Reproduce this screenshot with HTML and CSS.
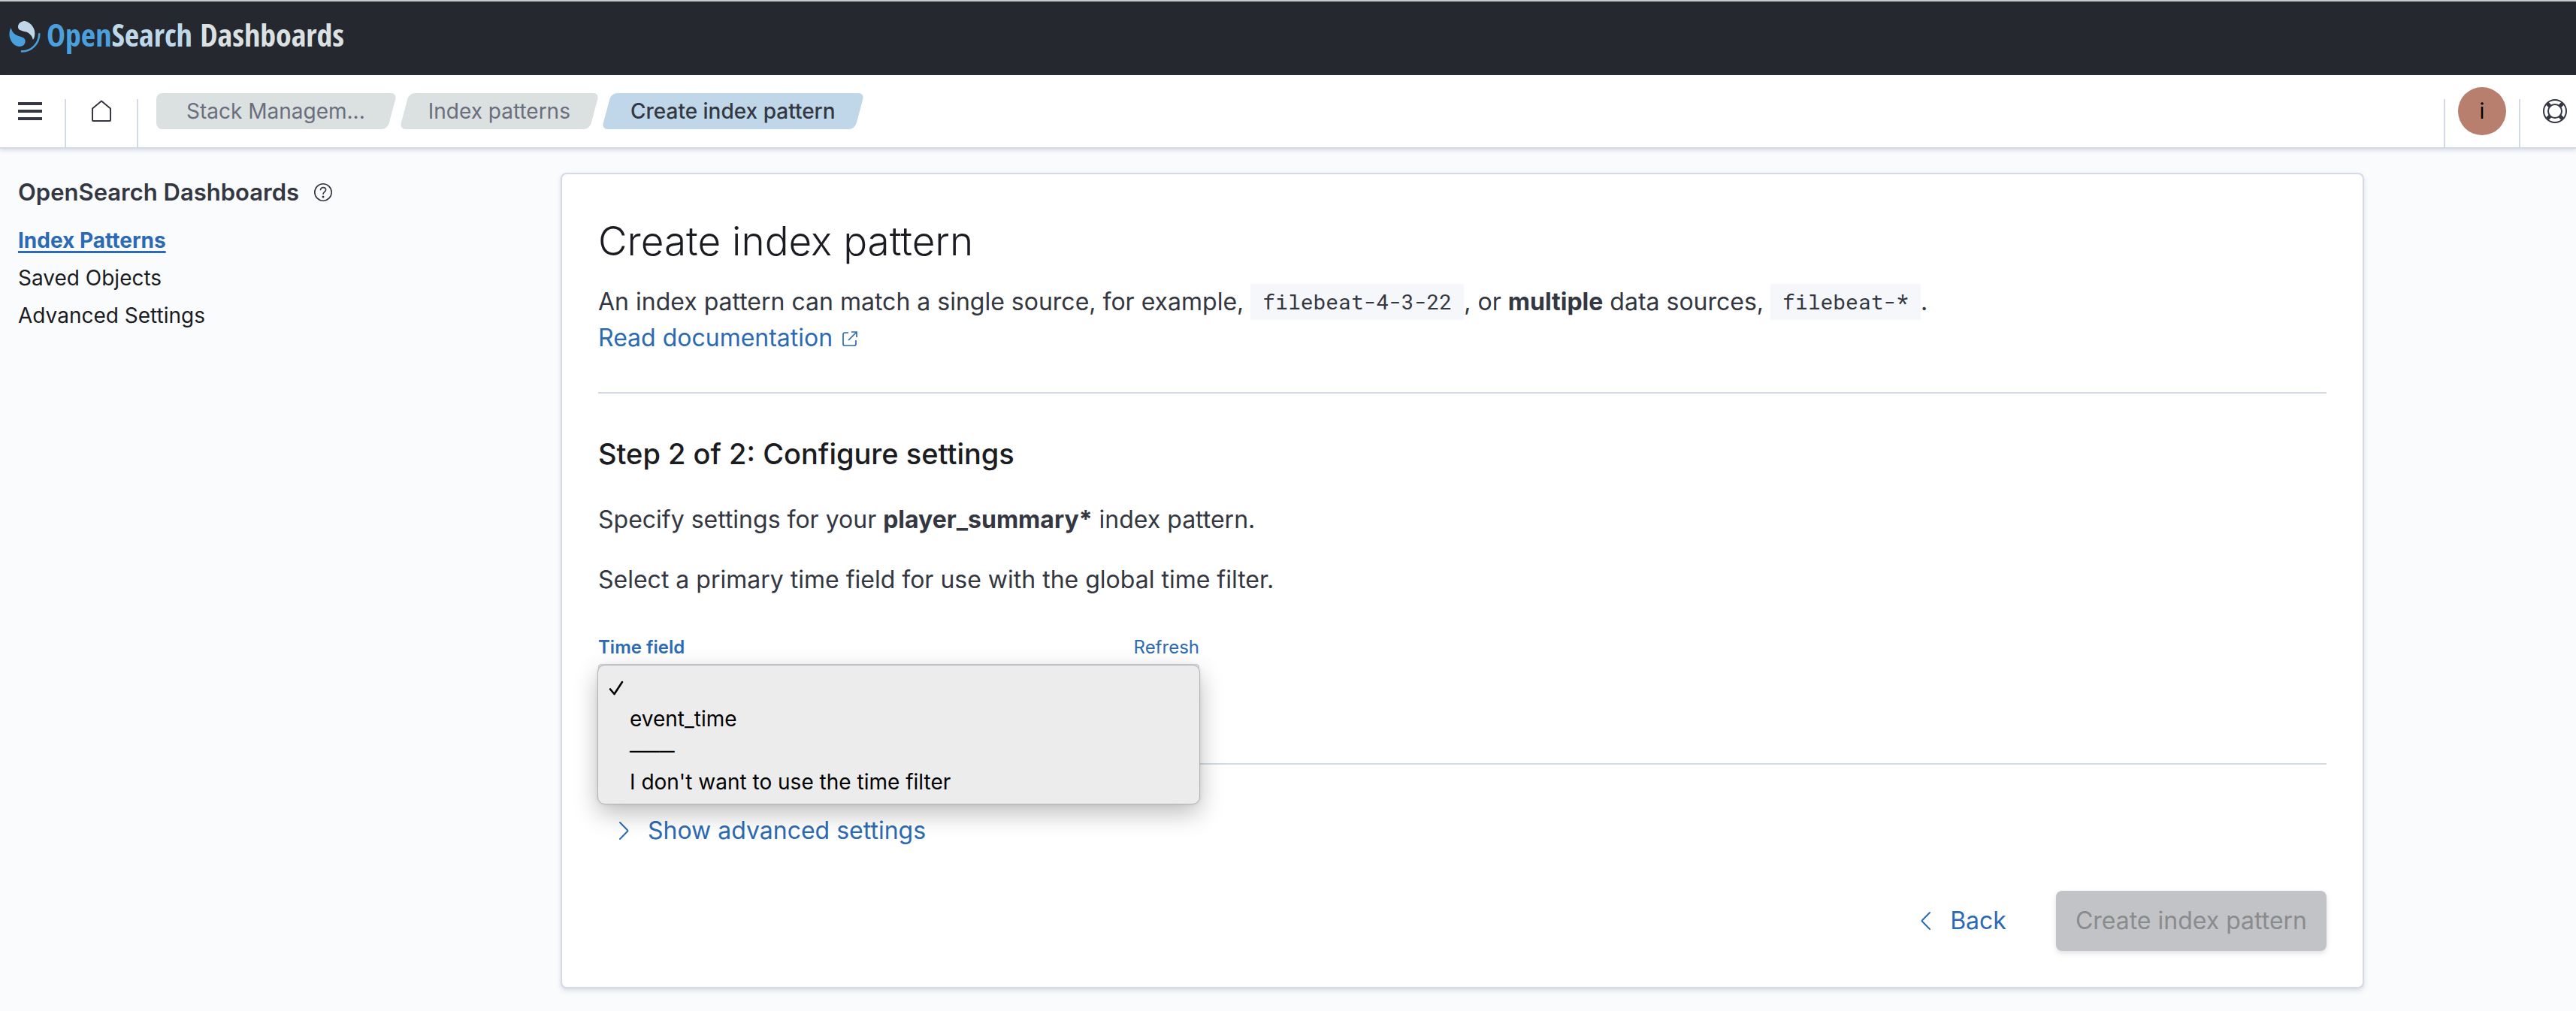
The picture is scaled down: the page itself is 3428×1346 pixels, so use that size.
FILE: index.html
```html
<!DOCTYPE html>
<html lang="en">
<head>
<meta charset="utf-8">
<title>Create index pattern - OpenSearch Dashboards</title>
<link rel="stylesheet" href="styles.css">
</head>
<body>
<header class="brand-bar">
  <a class="brand" href="#">
    <svg class="brand-mark" viewBox="0 0 42 42" aria-hidden="true">
      <path fill="#bfd8e9" d="M12 7C13 2 17 0 21 0C30 2 36 11 34 20C33.600 22.300 33 23.800 31.800 25C31 20 28 16.800 23 14.600C17 12.600 11.500 12.800 12 7Z"/>
      <path fill="#4aa0dc" d="M2.600 9C-1.400 16 .3 26 7 31.500C11 34.500 17 35 20.300 31.200C23 27 22 23 17 21.200C10 19 5 18 2.600 9Z"/>
      <path fill="none" stroke="#4aa0dc" stroke-width="2.600" stroke-linecap="round" d="M40.300 17.300C40 30 30 40.500 17 40.400"/>
    </svg>
    <span class="brand-name"><span class="brand-open">Open</span><span class="brand-search">Search</span> Dashboards</span>
  </a>
</header>
<nav class="top-nav" aria-label="Breadcrumbs">
  <button class="nav-button menu-button" type="button" aria-label="Toggle navigation">
    <svg class="icon" viewBox="0 0 32 32" aria-hidden="true"><path fill="#343741" d="M0 4h32v4H0zM0 14h32v4H0zM0 24h32v4H0z"/></svg>
  </button>
  <a class="nav-button home-button" href="#" aria-label="Home">
    <svg class="icon" viewBox="0 0 32 32" aria-hidden="true"><path fill="none" stroke="#343741" stroke-width="2" stroke-linejoin="round" d="M4 12.500L16 2.500L28 12.500V28a1 1 0 0 1-1 1H5a1 1 0 0 1-1-1Z"/></svg>
  </a>
  <ol class="crumbs">
    <li><a class="crumb crumb-first" href="#">Stack Managem...</a></li>
    <li><a class="crumb" href="#">Index patterns</a></li>
    <li><span class="crumb crumb-current" aria-current="page">Create index pattern</span></li>
  </ol>
  <button class="nav-button user-button" type="button" aria-label="Account"><span class="avatar">i</span></button>
  <button class="nav-button help-button" type="button" aria-label="Help">
    <svg class="icon" viewBox="0 0 32 32" aria-hidden="true">
      <g fill="none" stroke="#343741" stroke-width="2"><circle cx="16" cy="16" r="15"/><circle cx="16" cy="16" r="9"/></g>
      <path stroke="#343741" stroke-width="5" d="M5.800 5.800l3.800 3.800M26.200 5.800l-3.800 3.800M5.800 26.200l3.800-3.800M26.200 26.200l-3.800-3.800"/>
    </svg>
  </button>
</nav>
<div class="page">
  <aside class="sidebar">
    <h2 class="sidebar-title">OpenSearch Dashboards
      <svg class="sidebar-help" viewBox="0 0 24 24" aria-hidden="true"><circle cx="12" cy="12" r="11.200" fill="none" stroke="#343741" stroke-width="1.600"/><path fill="none" stroke="#343741" stroke-width="1.700" d="M8.500 9.200C8.500 6.800 10 5.600 12 5.600S15.600 6.900 15.600 8.800C15.600 11.500 12 11.500 12 14.800"/><circle cx="12" cy="18" r="1.500" fill="#343741"/></svg>
    </h2>
    <ul class="side-links">
      <li><a class="side-link side-link-active" href="#" aria-current="page">Index Patterns</a></li>
      <li><a class="side-link" href="#">Saved Objects</a></li>
      <li><a class="side-link" href="#">Advanced Settings</a></li>
    </ul>
  </aside>
  <main class="content">
    <section class="panel">
      <h1 class="title">Create index pattern</h1>
      <p class="intro">An index pattern can match a single source, for example, <code>filebeat-4-3-22</code>, or <strong>multiple</strong> data sources, <code>filebeat-*</code>.<br>
        <a class="link" href="#">Read documentation <svg class="external" viewBox="0 0 20 20" aria-hidden="true"><path fill="none" stroke="currentColor" stroke-width="1.700" d="M8 2H3a2 2 0 0 0-2 2v13a2 2 0 0 0 2 2h13a2 2 0 0 0 2-2V12M12 1h7v7M19 1L8 12"/></svg></a></p>
      <hr class="rule">
      <h2 class="step">Step 2 of 2: Configure settings</h2>
      <p class="text">Specify settings for your <strong>player_summary*</strong> index pattern.</p>
      <p class="text">Select a primary time field for use with the global time filter.</p>
      <form class="form">
        <div class="field">
          <div class="field-head">
            <label class="field-label" for="time-field">Time field</label>
            <button class="refresh" type="button">Refresh</button>
          </div>
          <div class="select-wrap">
            <select class="select" id="time-field">
              <option selected></option>
              <option>event_time</option>
              <option disabled>───</option>
              <option>I don't want to use the time filter</option>
            </select>
            <ul class="menu" role="listbox" aria-label="Time field">
              <li class="menu-item" role="option" aria-selected="true"><svg class="check" viewBox="0 0 20 20" aria-label="Selected"><path fill="none" stroke="#000" stroke-width="2.600" stroke-linecap="round" stroke-linejoin="round" d="M2 11.500L7.500 18L18 2"/></svg></li>
              <li class="menu-item" role="option">event_time</li>
              <li class="menu-item" role="option" aria-disabled="true">───</li>
              <li class="menu-item" role="option">I don't want to use the time filter</li>
            </ul>
          </div>
        </div>
        <hr class="rule">
        <button class="button-empty advanced" type="button"><svg class="icon" viewBox="0 0 32 32" aria-hidden="true"><path fill="none" stroke="currentColor" stroke-width="2" stroke-linecap="round" stroke-linejoin="round" d="M11 5L21 15.200a1 1 0 0 1 0 1.600L11 27"/></svg>Show advanced settings</button>
        <div class="actions">
          <button class="button-empty" type="button"><svg class="icon" viewBox="0 0 32 32" aria-hidden="true"><path fill="none" stroke="currentColor" stroke-width="2" stroke-linecap="round" stroke-linejoin="round" d="M21 5L11 15.200a1 1 0 0 0 0 1.600L21 27"/></svg>Back</button>
          <button class="button-fill" type="submit" disabled>Create index pattern</button>
        </div>
      </form>
    </section>
  </main>
</div>
</body>
</html>
```

FILE: styles.css
```css
* { box-sizing: border-box; }

body {
  margin: 0;
  background: #fafbfd;
  color: #343741;
  font: 400 32px/48px Inter, "Liberation Sans", sans-serif;
}

h1, h2, p, ul, ol { margin: 0; padding: 0; }
ul, ol { list-style: none; }
a { color: inherit; text-decoration: none; }
button { border: 0; padding: 0; background: none; font: inherit; color: inherit; cursor: pointer; }
strong { font-weight: 700; }
.icon { display: block; flex: none; width: 32px; height: 32px; }

/* Brand bar */
.brand-bar {
  display: flex;
  align-items: flex-start;
  height: 100px;
  padding: 18px 12px;
  border-top: 2px solid #c9c9cb;
  background: #25282f;
}
.brand { display: flex; align-items: flex-start; gap: 8px; }
.brand-mark { width: 42px; height: 42px; margin-top: 8px; }
.brand-name {
  color: #dbe0e1;
  font: 700 42px/52px "Open Sans Condensed", "Liberation Sans Narrow", "Roboto Condensed", "Open Sans", sans-serif;
  white-space: nowrap;
}
.brand-open { color: #4aa0dc; }
.brand-search { color: #bfd8e9; }

/* Navigation bar */
.top-nav {
  position: relative;
  display: flex;
  height: 98px;
  border-bottom: 2px solid #d3dae6;
  background: #fff;
  box-shadow: 0 2px 6px rgba(100, 115, 150, .25);
}
.nav-button {
  display: flex;
  justify-content: center;
  height: 64px;
  margin-top: 32px;
}
.menu-button { width: 88px; padding-right: 6px; border-right: 2px solid #d3dae6; }
.home-button { width: 96px; border-right: 2px solid #d3dae6; }
.user-button { width: 102px; border-left: 2px solid #d3dae6; border-right: 2px solid #d3dae6; }
.help-button { width: 74px; padding-left: 18px; }
.avatar {
  width: 64px;
  height: 64px;
  margin-top: -16px;
  border-radius: 50%;
  background: #b87f6e;
  color: #000;
  font-size: 28px;
  line-height: 64px;
}
.crumbs { display: flex; flex: 1; gap: 16px; padding: 24px; }
.crumb {
  position: relative;
  z-index: 0;
  display: block;
  padding: 0 32px;
  color: #6a6f7d;
  font-size: 28px;
}
.crumb::before {
  content: "";
  position: absolute;
  z-index: -1;
  inset: 0;
  border-radius: 8px;
  background: #dbe0e1;
  transform: skewX(-15deg);
}
.crumb-first { padding: 0 36px 0 40px; border-radius: 8px 0 0 8px; background: linear-gradient(#dbe0e1, #dbe0e1) left / 50% 100% no-repeat; }
.crumb-first::before { left: 24px; }
.crumb-current { color: #343741; font-weight: 500; }
.crumb-current::before { background: #bfd7e8; }

/* Page */
.page { display: flex; padding: 32px 0; }
.sidebar { flex: none; width: 464px; padding: 2px 0 0 24px; }
.sidebar-title { display: flex; align-items: center; gap: 20px; font-size: 31px; font-weight: 600; }
.sidebar-help { width: 24px; height: 24px; }
.side-links { padding-top: 16px; }
.side-link { display: inline-block; margin-bottom: 2px; color: #1a1c21; font-size: 28px; vertical-align: top; }
.side-link-active {
  color: #2c6bb3;
  font-weight: 700;
  text-decoration: underline 3px;
  text-underline-offset: 4px;
}

.content { flex: 1; min-width: 0; }
.panel {
  max-width: 2400px;
  margin: 0 auto;
  padding: 48px;
  border: 2px solid #d3dae6;
  border-radius: 8px;
  background: #fff;
  box-shadow: 0 3px 6px rgba(100, 115, 150, .22);
}
.title { margin-bottom: 16px; color: #1a1c21; font-size: 53px; font-weight: 300; line-height: 82px; }
.intro code {
  display: inline-block;
  padding: 0 16px;
  background: #f5f7fa;
  font: 400 28px/48px "Roboto Mono", "DejaVu Sans Mono", monospace;
  vertical-align: top;
}
.link, .refresh, .button-empty { color: #2c6bb3; }
.external { width: 20px; height: 20px; margin-left: 4px; }
.rule { height: 2px; margin: 48px 0; border: 0; background: #d3dae6; }
.step { margin: 56px 0 40px; color: #1a1c21; font-size: 38px; font-weight: 500; }
.text { margin-bottom: 32px; }

/* Time field */
.form { padding-top: 16px; }
.field { max-width: 800px; margin-bottom: 52px; }
.field-head { display: flex; justify-content: space-between; margin-bottom: 4px; font-size: 24px; line-height: 36px; }
.field-label { color: #2c6bb3; font-weight: 600; }
.select-wrap { position: relative; }
.select {
  display: block;
  width: 100%;
  height: 80px;
  padding: 0 24px;
  border: 2px solid #d3dae6;
  border-radius: 4px;
  background: #fbfcfd;
  font: inherit;
}
.menu {
  position: absolute;
  top: 1px;
  left: -1px;
  right: -1px;
  padding: 8px 0;
  border: 1px solid #b4b4b4;
  border-radius: 10px;
  background: #ececec;
  box-shadow: 0 12px 32px rgba(0, 0, 0, .26), 0 0 4px rgba(0, 0, 0, .1);
  color: #000;
  font-size: 28px;
  line-height: 42px;
}
.menu-item { display: flex; align-items: center; height: 42px; padding-left: 42px; }
.check { width: 20px; height: 20px; margin: 2px 0 0 -28px; }

/* Buttons */
.button-empty { display: flex; align-items: center; gap: 16px; height: 80px; padding: 0 18px; }
.actions { display: flex; justify-content: flex-end; gap: 48px; margin-top: 40px; }
.button-fill {
  height: 80px;
  padding: 0 26px;
  border-radius: 8px;
  background: #c2c3c6;
  box-shadow: 0 3px 6px rgba(100, 100, 120, .2);
  color: #8a8b8d;
}
```
